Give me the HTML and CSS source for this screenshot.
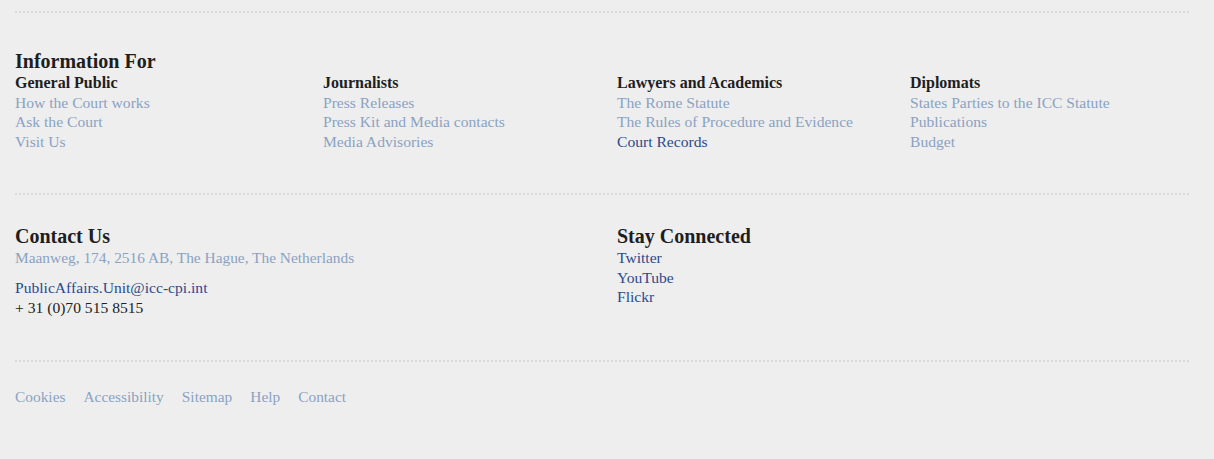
FILE: index.html
```html
<!DOCTYPE html>
<html>
<head>
<meta charset="utf-8">
<link rel="stylesheet" href="styles.css">
</head>
<body>
<footer class="footer">
  <div class="rule"></div>
  <section class="info">
    <h2 class="title">Information For</h2>
    <div class="cols">
      <div class="col">
        <h3 class="sub">General Public</h3>
        <a class="lnk" href="#">How the Court works</a>
        <a class="lnk" href="#">Ask the Court</a>
        <a class="lnk" href="#">Visit Us</a>
      </div>
      <div class="col">
        <h3 class="sub">Journalists</h3>
        <a class="lnk" href="#">Press Releases</a>
        <a class="lnk" href="#">Press Kit and Media contacts</a>
        <a class="lnk" href="#">Media Advisories</a>
      </div>
      <div class="col">
        <h3 class="sub">Lawyers and Academics</h3>
        <a class="lnk" href="#">The Rome Statute</a>
        <a class="lnk" href="#">The Rules of Procedure and Evidence</a>
        <a class="lnk dark" href="#">Court Records</a>
      </div>
      <div class="col">
        <h3 class="sub">Diplomats</h3>
        <a class="lnk" href="#">States Parties to the ICC Statute</a>
        <a class="lnk" href="#">Publications</a>
        <a class="lnk" href="#">Budget</a>
      </div>
    </div>
  </section>
  <div class="rule"></div>
  <section class="contact">
    <div class="half">
      <h2 class="title">Contact Us</h2>
      <p class="addr">Maanweg, 174, 2516 AB, The Hague, The Netherlands</p>
      <a class="lnk dark" href="#">PublicAffairs.Unit@icc-cpi.int</a>
      <span class="phone">+ 31 (0)70 515 8515</span>
    </div>
    <div class="half">
      <h2 class="title">Stay Connected</h2>
      <a class="lnk dark" href="#">Twitter</a>
      <a class="lnk dark" href="#">YouTube</a>
      <a class="lnk dark" href="#">Flickr</a>
    </div>
  </section>
  <div class="rule"></div>
  <nav class="bottom">
    <a class="lnk small" href="#">Cookies</a>
    <a class="lnk small" href="#">Accessibility</a>
    <a class="lnk small" href="#">Sitemap</a>
    <a class="lnk small" href="#">Help</a>
    <a class="lnk small" href="#">Contact</a>
  </nav>
</footer>
</body>
</html>
```
FILE: styles.css
```css
html, body {
  margin: 0;
  padding: 0;
  background: #eeeeee;
}
body {
  font-family: "Liberation Serif", "DejaVu Serif", serif;
  color: #222;
}
.footer {
  padding: 11px 25px 0 15px;
}
.rule {
  border-top: 2px dotted #dadada;
  height: 0;
}
.title {
  margin: 0;
  font-size: 20px;
  font-weight: bold;
  line-height: 24px;
  color: #1e1e1e;
}
.info {
  padding: 36px 0 42px;
}
.cols {
  display: grid;
  grid-template-columns: 308px 294px 293px 1fr;
}
.col {
  display: flex;
  flex-direction: column;
}
.sub {
  margin: 0;
  font-size: 16px;
  font-weight: bold;
  line-height: 19.5px;
  color: #1e1e1e;
}
.lnk {
  font-size: 15.6px;
  line-height: 19.5px;
  color: #8aa2c2;
  text-decoration: none;
}
.lnk.small {
  font-size: 15.4px;
}
.lnk.dark {
  color: #2b4a8c;
}
.contact {
  display: grid;
  grid-template-columns: 602px 1fr;
  padding: 29px 0 42.5px;
}
.half {
  display: flex;
  flex-direction: column;
}
.addr {
  margin: 0 0 10.5px;
  font-size: 15.4px;
  line-height: 19.5px;
  color: #8aa2c2;
}
.phone {
  font-size: 15.6px;
  line-height: 19.5px;
  color: #222;
}
.bottom {
  display: flex;
  gap: 18px;
  padding: 25px 0 0;
}
```
